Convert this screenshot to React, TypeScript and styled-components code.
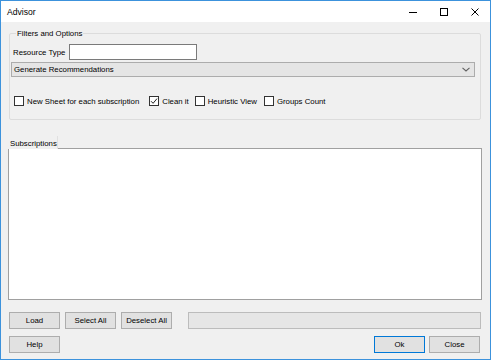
import React from 'react';
import styled, { createGlobalStyle } from 'styled-components';

const GlobalStyle = createGlobalStyle`
  html, body {
    margin: 0;
    padding: 0;
    background: #ffffff;
  }
  body {
    font-family: "Liberation Sans", Arial, sans-serif;
    color: #000;
  }
  * {
    box-sizing: border-box;
  }
`;

interface CheckOption {
  label: string;
  checked: boolean;
  spacing: number;
}

const options: CheckOption[] = [
  { label: 'New Sheet for each subscription', checked: false, spacing: 10 },
  { label: 'Clean it', checked: true, spacing: 6 },
  { label: 'Heuristic View', checked: false, spacing: 7 },
  { label: 'Groups Count', checked: false, spacing: 0 },
];

function App(): JSX.Element {
  return (
    <>
      <GlobalStyle />
      <Window>
        <TitleBar>
          <Title>Advisor</Title>
          <Controls>
            <ControlButton>
              <svg width="10" height="10" viewBox="0 0 10 10">
                <line x1="1" y1="5.5" x2="9" y2="5.5" stroke="#000" strokeWidth="1" />
              </svg>
            </ControlButton>
            <ControlButton>
              <svg width="10" height="10" viewBox="0 0 10 10">
                <rect x="1.5" y="1.5" width="7" height="7" fill="none" stroke="#000" strokeWidth="1" />
              </svg>
            </ControlButton>
            <ControlButton>
              <svg width="10" height="10" viewBox="0 0 10 10">
                <path d="M1.5 1.5 L8.5 8.5 M8.5 1.5 L1.5 8.5" stroke="#000" strokeWidth="1" />
              </svg>
            </ControlButton>
          </Controls>
        </TitleBar>

        <Body>
          <GroupBox>
            <Legend>Filters and Options</Legend>
            <ResourceRow>
              <FieldLabel>Resource Type</FieldLabel>
              <TextBox />
            </ResourceRow>
            <Combo>
              <span>Generate Recommendations</span>
              <svg width="8" height="5" viewBox="0 0 8 5">
                <path d="M0.5 0.8 L4 4 L7.5 0.8" fill="none" stroke="#606060" strokeWidth="1.1" />
              </svg>
            </Combo>
            <CheckRow>
              {options.map((opt) => (
                <CheckItem key={opt.label} $spacing={opt.spacing}>
                  <CheckBox>
                    {opt.checked && (
                      <svg width="8" height="8" viewBox="0 0 8 8">
                        <path d="M1 4.2 L3.1 6.3 L7 1.6" fill="none" stroke="#222" strokeWidth="1" />
                      </svg>
                    )}
                  </CheckBox>
                  <span>{opt.label}</span>
                </CheckItem>
              ))}
            </CheckRow>
          </GroupBox>

          <TabHeader>
            <Tab>Subscriptions</Tab>
            <TabFill />
          </TabHeader>
          <ListBox />

          <ButtonRow>
            <Button>Load</Button>
            <Button>Select All</Button>
            <Button>Deselect All</Button>
            <Progress />
          </ButtonRow>
          <FooterRow>
            <Button>Help</Button>
            <Spacer />
            <Button $primary>Ok</Button>
            <Button>Close</Button>
          </FooterRow>
        </Body>
      </Window>
    </>
  );
}

export default App;

const Window = styled.div`
  width: 491px;
  height: 360px;
  border: 1px solid #3c92dc;
  background: #f0f0f0;
  display: flex;
  flex-direction: column;
  font-size: 7.8px;
`;

const TitleBar = styled.div`
  height: 21px;
  flex: none;
  background: #ffffff;
  display: flex;
  align-items: center;
`;

const Title = styled.div`
  padding-left: 6px;
  font-size: 8.6px;
`;

const Controls = styled.div`
  margin-left: auto;
  display: flex;
  height: 100%;
`;

const ControlButton = styled.div`
  width: 31px;
  height: 100%;
  display: flex;
  align-items: center;
  justify-content: center;
`;

const Body = styled.div`
  flex: 1;
  display: flex;
  flex-direction: column;
  padding: 6px 9px 6px 8px;
  min-height: 0;
`;

const GroupBox = styled.fieldset`
  margin: 0;
  padding: 5px 5px 12px 1px;
  border: 1px solid #dcdcdc;
  border-radius: 2px;
  min-width: 0;
`;

const Legend = styled.legend`
  margin-left: 5px;
  padding: 0 1px;
  line-height: 11px;
  font-size: 7.8px;
`;

const ResourceRow = styled.div`
  display: flex;
  align-items: center;
  height: 16px;
`;

const FieldLabel = styled.span`
  margin-left: 2px;
`;

const TextBox = styled.div`
  margin-left: 4px;
  width: 128px;
  height: 16px;
  background: #ffffff;
  border: 1px solid #7a7a7a;
`;

const Combo = styled.div`
  margin-top: 2px;
  height: 15px;
  display: flex;
  align-items: center;
  justify-content: space-between;
  padding: 0 4px 0 2px;
  background: #e5e5e5;
  border: 1px solid #acacac;
`;

const CheckRow = styled.div`
  margin-top: 18px;
  height: 12px;
  padding-left: 3px;
  display: flex;
  align-items: center;
`;

const CheckItem = styled.div<{ $spacing: number }>`
  display: flex;
  align-items: center;
  gap: 3px;
  margin-right: ${(p) => p.$spacing}px;
`;

const CheckBox = styled.div`
  width: 10px;
  height: 10px;
  background: #ffffff;
  border: 1px solid #333333;
  display: flex;
  align-items: center;
  justify-content: center;
`;

const TabHeader = styled.div`
  margin: 16px -1px 0 -1px;
  display: flex;
  height: 13px;
  flex: none;
`;

const Tab = styled.div`
  width: 50px;
  padding-left: 2px;
  padding-top: 1px;
  display: flex;
  align-items: center;
  border-right: 1px solid #e0e0e0;
`;

const TabFill = styled.div`
  flex: 1;
  border-bottom: 1px solid #a0a0a0;
`;

const ListBox = styled.div`
  flex: 1;
  margin: 0 -1px;
  background: #ffffff;
  border: 1px solid #a0a0a0;
  border-top: none;
`;

const ButtonRow = styled.div`
  margin-top: 12px;
  display: flex;
  gap: 5px;
  height: 17px;
  flex: none;
`;

const FooterRow = styled.div`
  margin-top: 7px;
  display: flex;
  gap: 4px;
  height: 17px;
  flex: none;
  padding-right: 1px;
`;

const Button = styled.div<{ $primary?: boolean }>`
  width: 51px;
  height: 17px;
  display: flex;
  align-items: center;
  justify-content: center;
  background: #e1e1e1;
  border: 1px solid ${(p) => (p.$primary ? '#0078d7' : '#adadad')};
`;

const Progress = styled.div`
  flex: 1;
  margin-left: 11px;
  background: #e6e6e6;
  border: 1px solid #bcbcbc;
`;

const Spacer = styled.div`
  flex: 1;
`;
